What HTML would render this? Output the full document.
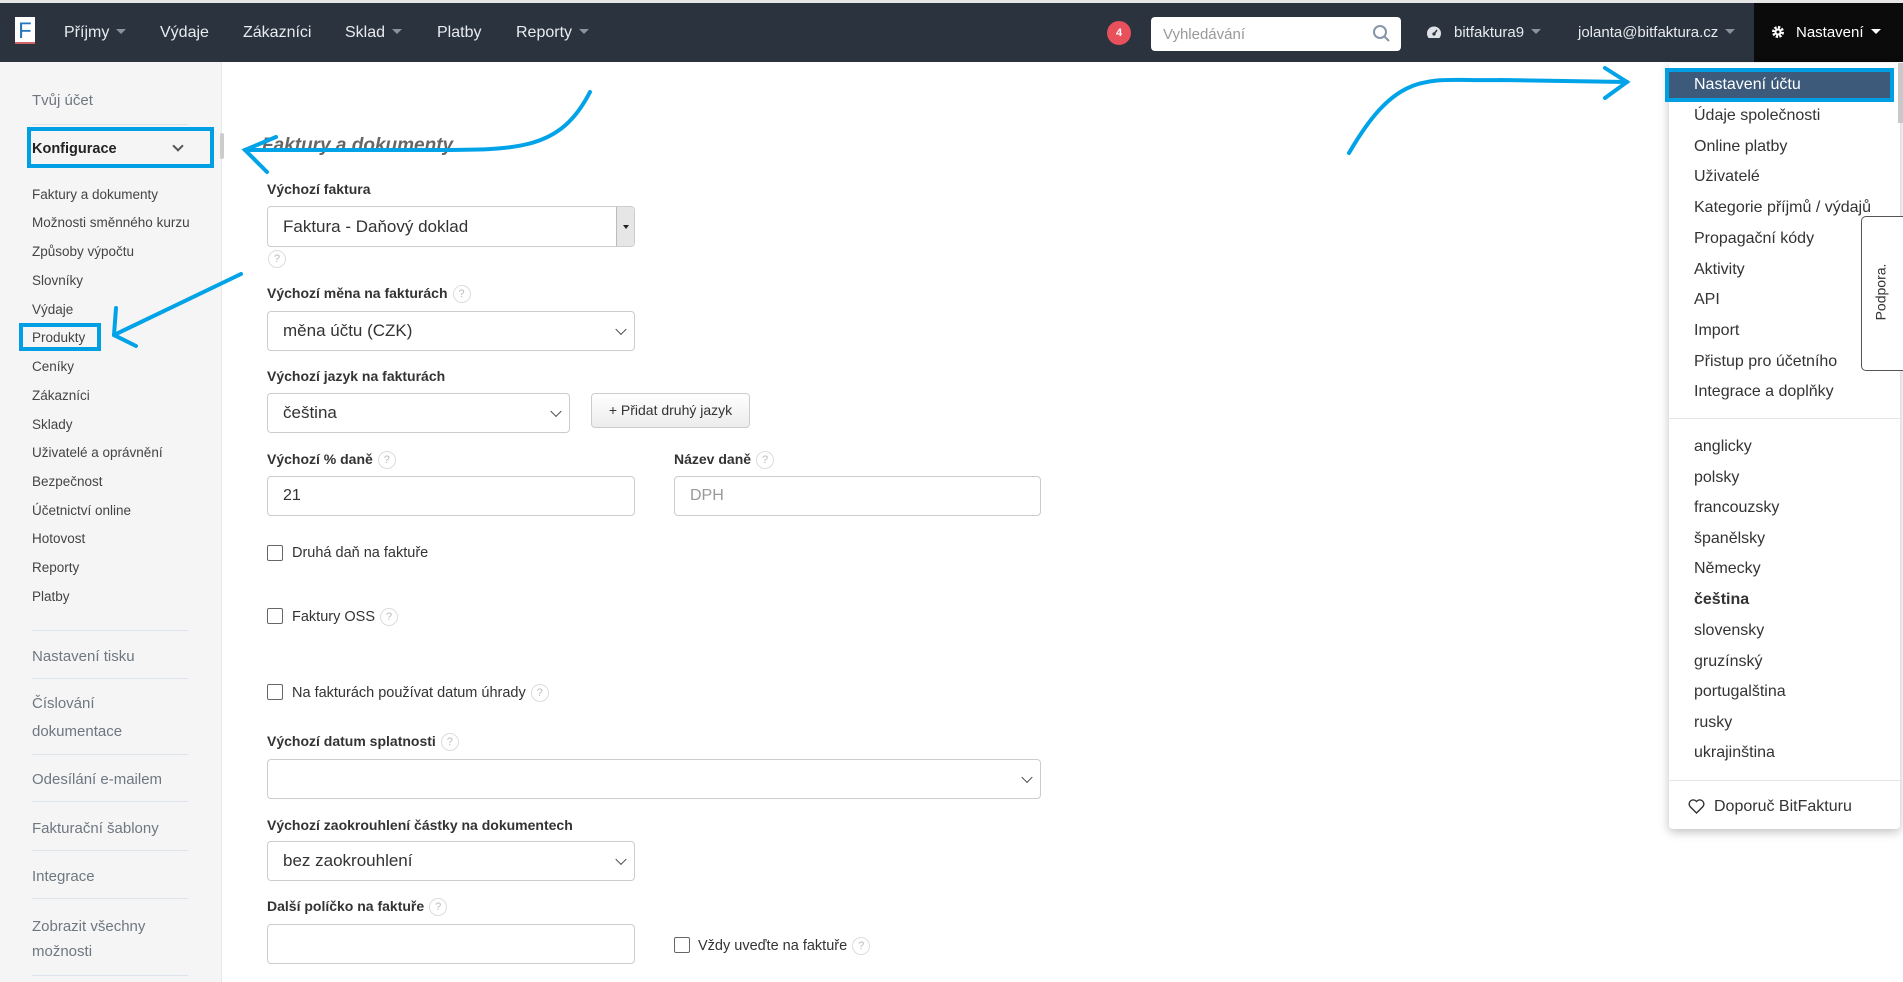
<!DOCTYPE html>
<html><head><meta charset="utf-8"><style>
*{box-sizing:border-box;margin:0;padding:0}
body{width:1903px;height:982px;overflow:hidden;background:#fff;font-family:"Liberation Sans",Arial,sans-serif;color:#333;position:relative}
.a{position:absolute;white-space:nowrap}
.nav{position:absolute;left:0;top:3px;width:1903px;height:59px;background:#2b333e;border-top:0}
.top{position:absolute;left:0;top:0;width:1903px;height:3px;background:#e6e6e6}
.ni{position:absolute;top:24px;color:#e8ebef;font-size:16px}
.car{display:inline-block;width:0;height:0;border-left:5px solid transparent;border-right:5px solid transparent;border-top:5px solid #8a929c;margin-left:7px;vertical-align:3px}
.side{position:absolute;left:0;top:62px;width:222px;height:920px;background:#f5f5f5;border-right:1px solid #e8e8e8}
.si{position:absolute;left:32px;font-size:13.5px;color:#444;margin-top:1px}
.sb{position:absolute;left:32px;font-size:15px;color:#6f7780;margin-top:2px}
.hr{position:absolute;left:32px;width:156px;height:1px;background:#dde3ea}
.lb{position:absolute;left:267px;font-size:14px;font-weight:bold;color:#333;margin-top:1px}
.q{display:inline-block;width:18px;height:18px;border:1px solid #ddd;border-radius:50%;font-size:11px;color:#bbb;text-align:center;line-height:16px;font-weight:normal;vertical-align:middle;margin-left:5px}
.inp{position:absolute;border:1px solid #ccc;border-radius:4px;background:#fff;font-size:17px;color:#333;padding-left:15px;display:flex;align-items:center}
.chev{position:absolute;right:9px;top:50%;width:8px;height:8px;border-right:1.5px solid #444;border-bottom:1.5px solid #444;transform:translateY(-70%) rotate(45deg)}
.cb{position:absolute;left:267px;width:16px;height:16px;border:1.5px solid #666;border-radius:2px;margin-top:1px}
.ct{position:absolute;left:292px;font-size:14.5px;color:#333;margin-top:1px}
.dd{position:absolute;left:1669px;top:63px;width:231px;height:766px;background:#fff;border-radius:0 0 4px 4px;box-shadow:0 3px 10px rgba(0,0,0,.25)}
.di{position:absolute;left:1694px;font-size:16px;color:#333;margin-top:1px}
</style></head><body>
<div class="top"></div>
<div class="nav"></div>
<div class="a" style="left:15px;top:17px;width:20px;height:27px;background:#fff;color:#2176bd;font-size:22px;text-align:center;line-height:27px;border-bottom:2px solid #c66">F</div>
<div class="ni" style="left:64px">Příjmy<span class="car"></span></div>
<div class="ni" style="left:160px">Výdaje</div>
<div class="ni" style="left:243px">Zákazníci</div>
<div class="ni" style="left:345px">Sklad<span class="car"></span></div>
<div class="ni" style="left:437px">Platby</div>
<div class="ni" style="left:516px">Reporty<span class="car"></span></div>
<div class="a" style="left:1107px;top:21px;width:24px;height:24px;border-radius:50%;background:#e8505b;color:#fff;font-size:11px;font-weight:bold;text-align:center;line-height:24px">4</div>
<div class="a" style="left:1151px;top:17px;width:250px;height:34px;background:#fff;border-radius:4px;font-size:15px;color:#999;padding:9px 12px">Vyhledávání</div>
<svg class="a" style="left:1372px;top:24px" width="20" height="20"><circle cx="8" cy="8" r="6" fill="none" stroke="#8795a8" stroke-width="2"/><line x1="12.5" y1="12.5" x2="17" y2="17" stroke="#8795a8" stroke-width="2"/></svg>
<svg class="a" style="left:1426px;top:25px" width="16" height="16"><circle cx="8" cy="8.5" r="7" fill="#dfe3e8"/><rect x="0" y="13" width="16" height="3" fill="#2b333e"/><circle cx="8" cy="9" r="1.6" fill="#2b333e"/><line x1="8" y1="9" x2="11" y2="5" stroke="#2b333e" stroke-width="1.5"/></svg>
<div class="ni" style="left:1454px;font-size:15px">bitfaktura9<span class="car"></span></div>
<div class="ni" style="left:1578px;font-size:15px">jolanta@bitfaktura.cz<span class="car"></span></div>
<div class="a" style="left:1754px;top:3px;width:149px;height:59px;background:#0b0b0b"></div>
<svg class="a" style="left:1771px;top:25px" width="14" height="14" viewBox="0 0 14 14"><circle cx="7" cy="7" r="4.5" fill="none" stroke="#fff" stroke-width="3" stroke-dasharray="2.2 1.3"/><circle cx="7" cy="7" r="3.5" fill="#fff"/><circle cx="7" cy="7" r="1.5" fill="#0b0b0b"/></svg>
<div class="ni" style="left:1796px;color:#fff;font-size:15px">Nastavení<span class="car" style="border-top-color:#fff"></span></div>

<div class="side"></div>
<div class="a" style="left:220px;top:133px;width:4px;height:26px;background:#ccc;border-radius:2px"></div>
<div class="sb" style="top:90px">Tvůj účet</div>
<div class="hr" style="top:124px"></div>
<div class="a" style="left:27px;top:127px;width:187px;height:41px;border:4px solid #009fe3"></div>
<div class="a" style="left:32px;top:141px;font-size:14.5px;font-weight:bold;color:#222">Konfigurace</div>
<div class="a" style="left:174px;top:142px;width:8px;height:8px;border-right:2px solid #555;border-bottom:2px solid #555;transform:rotate(45deg)"></div>
<div class="si" style="top:186px">Faktury a dokumenty</div>
<div class="si" style="top:214px">Možnosti směnného kurzu</div>
<div class="si" style="top:243px">Způsoby výpočtu</div>
<div class="si" style="top:272px">Slovníky</div>
<div class="si" style="top:301px">Výdaje</div>
<div class="si" style="top:329px">Produkty</div>
<div class="a" style="left:19px;top:323px;width:82px;height:28px;border:4px solid #009fe3"></div>
<div class="si" style="top:358px">Ceníky</div>
<div class="si" style="top:387px">Zákazníci</div>
<div class="si" style="top:416px">Sklady</div>
<div class="si" style="top:444px">Uživatelé a oprávnění</div>
<div class="si" style="top:473px">Bezpečnost</div>
<div class="si" style="top:502px">Účetnictví online</div>
<div class="si" style="top:530px">Hotovost</div>
<div class="si" style="top:559px">Reporty</div>
<div class="si" style="top:588px">Platby</div>
<div class="hr" style="top:630px"></div>
<div class="sb" style="top:646px">Nastavení tisku</div>
<div class="hr" style="top:678px"></div>
<div class="sb" style="top:693px">Číslování</div>
<div class="sb" style="top:721px">dokumentace</div>
<div class="hr" style="top:754px"></div>
<div class="sb" style="top:769px">Odesílání e-mailem</div>
<div class="hr" style="top:801px"></div>
<div class="sb" style="top:818px">Fakturační šablony</div>
<div class="hr" style="top:850px"></div>
<div class="sb" style="top:866px">Integrace</div>
<div class="hr" style="top:898px"></div>
<div class="sb" style="top:916px">Zobrazit všechny</div>
<div class="sb" style="top:941px">možnosti</div>
<div class="hr" style="top:975px"></div>

<div class="a" style="left:262px;top:135px;font-size:19px;font-style:italic;font-weight:bold;color:#666">Faktury a dokumenty</div>
<div class="lb" style="top:180px">Výchozí faktura</div>
<div class="inp" style="left:267px;top:206px;width:368px;height:41px">Faktura - Daňový doklad<div style="position:absolute;right:0;top:0;width:18px;height:39px;background:#e6e6e6;border-left:1px solid #bbb;border-radius:0 4px 4px 0"><div style="position:absolute;left:6px;top:18px;border-left:3px solid transparent;border-right:3px solid transparent;border-top:4px solid #222"></div></div></div>
<div class="a" style="left:268px;top:250px"><span class="q" style="margin:0">?</span></div>
<div class="lb" style="top:284px">Výchozí měna na fakturách<span class="q">?</span></div>
<div class="inp" style="left:267px;top:311px;width:368px;height:40px">měna účtu (CZK)<div class="chev"></div></div>
<div class="lb" style="top:367px">Výchozí jazyk na fakturách</div>
<div class="inp" style="left:267px;top:393px;width:303px;height:40px">čeština<div class="chev"></div></div>
<div class="a" style="left:591px;top:393px;width:159px;height:35px;border:1px solid #ccc;border-radius:4px;background:linear-gradient(#fff,#ececec);font-size:14px;text-align:center;line-height:33px">+ Přidat druhý jazyk</div>
<div class="lb" style="top:450px">Výchozí % daně<span class="q">?</span></div>
<div class="lb" style="left:674px;top:450px">Název daně<span class="q">?</span></div>
<div class="inp" style="left:267px;top:476px;width:368px;height:40px;font-size:16px">21</div>
<div class="inp" style="left:674px;top:476px;width:367px;height:40px;font-size:16px;color:#999">DPH</div>
<div class="cb" style="top:544px"></div><div class="ct" style="top:544px">Druhá daň na faktuře</div>
<div class="cb" style="top:607px"></div><div class="ct" style="top:607px">Faktury OSS<span class="q">?</span></div>
<div class="cb" style="top:683px"></div><div class="ct" style="top:683px">Na fakturách používat datum úhrady<span class="q">?</span></div>
<div class="lb" style="top:732px">Výchozí datum splatnosti<span class="q">?</span></div>
<div class="inp" style="left:267px;top:759px;width:774px;height:40px"><div class="chev"></div></div>
<div class="lb" style="top:816px">Výchozí zaokrouhlení částky na dokumentech</div>
<div class="inp" style="left:267px;top:841px;width:368px;height:40px">bez zaokrouhlení<div class="chev"></div></div>
<div class="lb" style="top:897px">Další políčko na faktuře<span class="q">?</span></div>
<div class="inp" style="left:267px;top:924px;width:368px;height:40px"></div>
<div class="cb" style="left:674px;top:936px"></div><div class="ct" style="left:698px;top:936px">Vždy uveďte na faktuře<span class="q">?</span></div>

<div class="dd"></div>
<div class="a" style="left:1665px;top:68px;width:229px;height:34px;background:#3d5a7a;border:4px solid #009fe3"></div>
<div class="di" style="top:75px;color:#fff">Nastavení účtu</div>
<div class="di" style="top:106px">Údaje společnosti</div>
<div class="di" style="top:137px">Online platby</div>
<div class="di" style="top:167px">Uživatelé</div>
<div class="di" style="top:198px">Kategorie příjmů / výdajů</div>
<div class="di" style="top:229px">Propagační kódy</div>
<div class="di" style="top:260px">Aktivity</div>
<div class="di" style="top:290px">API</div>
<div class="di" style="top:321px">Import</div>
<div class="di" style="top:352px">Přistup pro účetního</div>
<div class="di" style="top:382px">Integrace a doplňky</div>
<div class="a" style="left:1669px;top:418px;width:231px;height:1px;background:#e5e5e5"></div>
<div class="di" style="top:437px">anglicky</div>
<div class="di" style="top:468px">polsky</div>
<div class="di" style="top:498px">francouzsky</div>
<div class="di" style="top:529px">španělsky</div>
<div class="di" style="top:559px">Německy</div>
<div class="di" style="top:590px;font-weight:bold">čeština</div>
<div class="di" style="top:621px">slovensky</div>
<div class="di" style="top:652px">gruzínský</div>
<div class="di" style="top:682px">portugalština</div>
<div class="di" style="top:713px">rusky</div>
<div class="di" style="top:743px">ukrajinština</div>
<div class="a" style="left:1669px;top:780px;width:231px;height:1px;background:#e5e5e5"></div>
<svg class="a" style="left:1688px;top:799px" width="17" height="15" viewBox="0 0 17 15"><path d="M8.5 14 L2 7.5 A3.6 3.6 0 0 1 8.5 2.5 A3.6 3.6 0 0 1 15 7.5 Z" fill="none" stroke="#333" stroke-width="1.4"/></svg>
<div class="di" style="left:1714px;top:797px">Doporuč BitFakturu</div>
<div class="a" style="left:1861px;top:216px;width:45px;height:155px;background:#fff;border:1px solid #555;border-radius:5px 0 0 5px"></div>
<div class="a" style="left:1852px;top:284px;font-size:14px;color:#333;transform:rotate(-90deg)">Podpora.</div>
<div class="a" style="left:1898px;top:63px;width:5px;height:60px;background:#c8c8c8"></div>

<svg class="a" style="left:0;top:0" width="1903" height="982">
<g fill="none" stroke="#00a3e8" stroke-width="4" stroke-linecap="round">
<path d="M590 92 C560 150 520 150 430 150 L245 150"/>
<path d="M276 137 L245 150 L267 172"/>
<path d="M241 274 L114 335"/>
<path d="M116 308 L114 335 L136 346"/>
<path d="M1349 153 C1400 65 1430 82 1500 80 L1627 82"/>
<path d="M1605 68 L1627 82 L1605 98"/>
</g></svg>
</body></html>
